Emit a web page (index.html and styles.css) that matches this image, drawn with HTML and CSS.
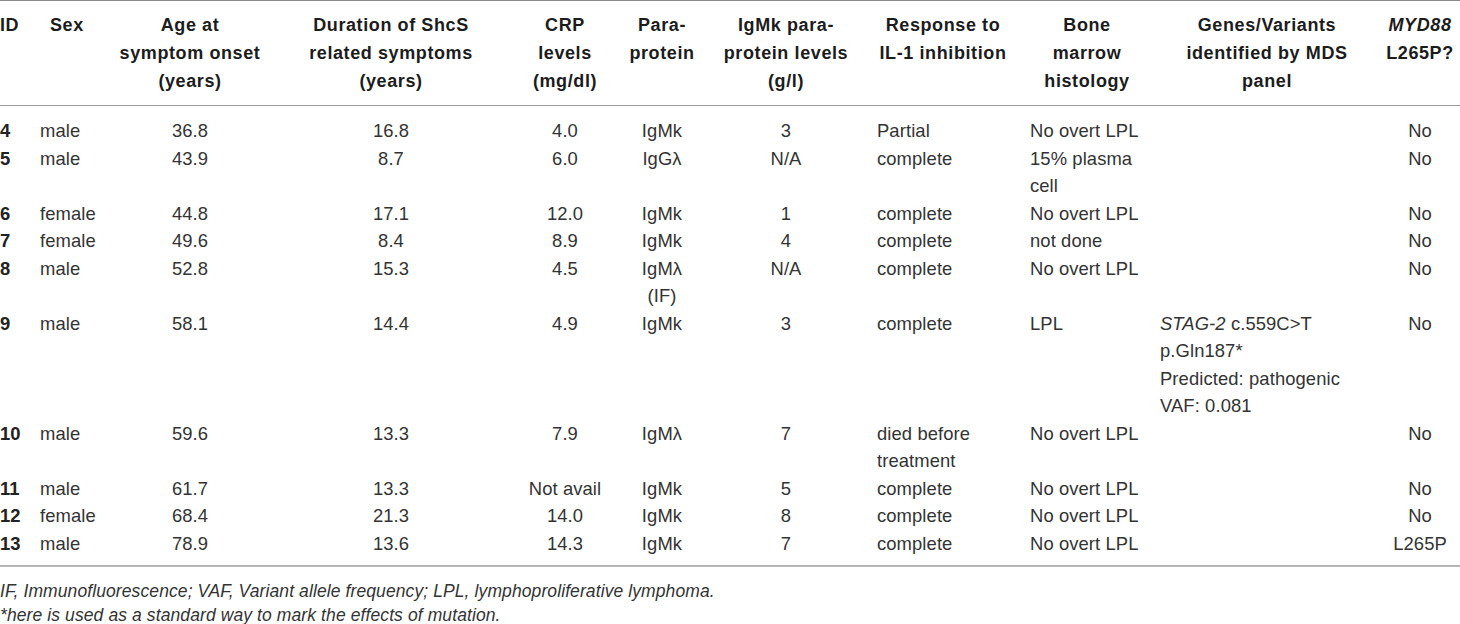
FILE: index.html
```html
<!DOCTYPE html>
<html lang="en">
<head>
<meta charset="utf-8">
<title>Table</title>
<link rel="stylesheet" href="styles.css">
</head>
<body>
<table class="tbl">
  <colgroup>
    <col class="c-id"><col class="c-sex"><col class="c-age"><col class="c-dur"><col class="c-crp"><col class="c-para"><col class="c-lvl"><col class="c-resp"><col class="c-bone"><col class="c-gene"><col class="c-myd">
  </colgroup>
  <thead>
    <tr>
      <th class="h-left">ID</th>
      <th class="h-left h-sex">Sex</th>
      <th>Age at<br>symptom onset<br>(years)</th>
      <th>Duration of ShcS<br>related symptoms<br>(years)</th>
      <th>CRP<br>levels<br>(mg/dl)</th>
      <th>Para-<br>protein</th>
      <th>IgMk para-<br>protein levels<br>(g/l)</th>
      <th>Response to<br>IL-1 inhibition</th>
      <th>Bone<br>marrow<br>histology</th>
      <th>Genes/Variants<br>identified by MDS<br>panel</th>
      <th><i>MYD88</i><br>L265P?</th>
    </tr>
  </thead>
  <tbody>
    <tr><td class="id">4</td><td class="sex">male</td><td class="ctr">36.8</td><td class="ctr">16.8</td><td class="ctr">4.0</td><td class="ctr">IgMk</td><td class="ctr">3</td><td class="resp">Partial</td><td class="bone">No overt LPL</td><td class="gene"></td><td class="ctr">No</td></tr>
    <tr><td class="id">5</td><td class="sex">male</td><td class="ctr">43.9</td><td class="ctr">8.7</td><td class="ctr">6.0</td><td class="ctr">IgGλ</td><td class="ctr">N/A</td><td class="resp">complete</td><td class="bone">15% plasma<br>cell</td><td class="gene"></td><td class="ctr">No</td></tr>
    <tr><td class="id">6</td><td class="sex">female</td><td class="ctr">44.8</td><td class="ctr">17.1</td><td class="ctr">12.0</td><td class="ctr">IgMk</td><td class="ctr">1</td><td class="resp">complete</td><td class="bone">No overt LPL</td><td class="gene"></td><td class="ctr">No</td></tr>
    <tr><td class="id">7</td><td class="sex">female</td><td class="ctr">49.6</td><td class="ctr">8.4</td><td class="ctr">8.9</td><td class="ctr">IgMk</td><td class="ctr">4</td><td class="resp">complete</td><td class="bone">not done</td><td class="gene"></td><td class="ctr">No</td></tr>
    <tr><td class="id">8</td><td class="sex">male</td><td class="ctr">52.8</td><td class="ctr">15.3</td><td class="ctr">4.5</td><td class="ctr">IgMλ<br>(IF)</td><td class="ctr">N/A</td><td class="resp">complete</td><td class="bone">No overt LPL</td><td class="gene"></td><td class="ctr">No</td></tr>
    <tr><td class="id">9</td><td class="sex">male</td><td class="ctr">58.1</td><td class="ctr">14.4</td><td class="ctr">4.9</td><td class="ctr">IgMk</td><td class="ctr">3</td><td class="resp">complete</td><td class="bone">LPL</td><td class="gene"><i>STAG-2</i> c.559C&gt;T<br>p.Gln187*<br>Predicted: pathogenic<br>VAF: 0.081</td><td class="ctr">No</td></tr>
    <tr><td class="id">10</td><td class="sex">male</td><td class="ctr">59.6</td><td class="ctr">13.3</td><td class="ctr">7.9</td><td class="ctr">IgMλ</td><td class="ctr">7</td><td class="resp">died before<br>treatment</td><td class="bone">No overt LPL</td><td class="gene"></td><td class="ctr">No</td></tr>
    <tr><td class="id">11</td><td class="sex">male</td><td class="ctr">61.7</td><td class="ctr">13.3</td><td class="ctr">Not avail</td><td class="ctr">IgMk</td><td class="ctr">5</td><td class="resp">complete</td><td class="bone">No overt LPL</td><td class="gene"></td><td class="ctr">No</td></tr>
    <tr><td class="id">12</td><td class="sex">female</td><td class="ctr">68.4</td><td class="ctr">21.3</td><td class="ctr">14.0</td><td class="ctr">IgMk</td><td class="ctr">8</td><td class="resp">complete</td><td class="bone">No overt LPL</td><td class="gene"></td><td class="ctr">No</td></tr>
    <tr><td class="id">13</td><td class="sex">male</td><td class="ctr">78.9</td><td class="ctr">13.6</td><td class="ctr">14.3</td><td class="ctr">IgMk</td><td class="ctr">7</td><td class="resp">complete</td><td class="bone">No overt LPL</td><td class="gene"></td><td class="ctr">L265P</td></tr>
  </tbody>
</table>
<div class="notes">
  <p>IF, Immunofluorescence; VAF, Variant allele frequency; LPL, lymphoproliferative lymphoma.</p>
  <p>*here is used as a standard way to mark the effects of mutation.</p>
</div>
</body>
</html>
```
FILE: styles.css
```css
html, body {
  margin: 0;
  padding: 0;
  background: #fff;
}
body {
  font-family: "Liberation Sans", Arial, Helvetica, sans-serif;
  color: #333;
  width: 1460px;
  overflow: hidden;
}
.tbl {
  width: 1460px;
  border-collapse: collapse;
  table-layout: fixed;
  font-size: 18.4px;
  line-height: 27.5px;
}
.c-id { width: 36px; }
.c-sex { width: 74px; }
.c-age { width: 160px; }
.c-dur { width: 242px; }
.c-crp { width: 106px; }
.c-para { width: 88px; }
.c-lvl { width: 160px; }
.c-resp { width: 154px; }
.c-bone { width: 134px; }
.c-gene { width: 226px; }
.c-myd { width: 80px; }

.tbl thead tr {
  border-top: 1px solid #8a8a8a;
  border-bottom: 1px solid #9a9a9a;
}
.tbl th {
  font-weight: bold;
  color: #1c1c1c;
  font-size: 18px;
  letter-spacing: 0.6px;
  line-height: 28px;
  text-align: center;
  vertical-align: top;
  padding: 10px 0;
  white-space: nowrap;
}
.tbl th.h-left { text-align: left; }
.tbl th.h-sex { padding-left: 14px; }

.tbl td {
  vertical-align: top;
  padding: 0;
  white-space: nowrap;
  letter-spacing: 0.1px;
}
.tbl tbody tr:first-child td { padding-top: 11px; }
.tbl tbody tr:last-child td { padding-bottom: 8px; }
.tbl tbody tr:last-child { border-bottom: 2px solid #b5b5b5; }

.tbl td.id { font-weight: bold; color: #222; }
.tbl td.sex { padding-left: 4px; }
.tbl td.ctr { text-align: center; }
.tbl td.resp { padding-left: 11px; }
.tbl td.bone { padding-left: 10px; }
.tbl td.gene { padding-left: 6px; }

.notes {
  margin-top: 12px;
  font-style: italic;
  font-size: 17.5px;
  letter-spacing: 0.1px;
  line-height: 24px;
  color: #333;
}
.notes p { margin: 0; }
```
